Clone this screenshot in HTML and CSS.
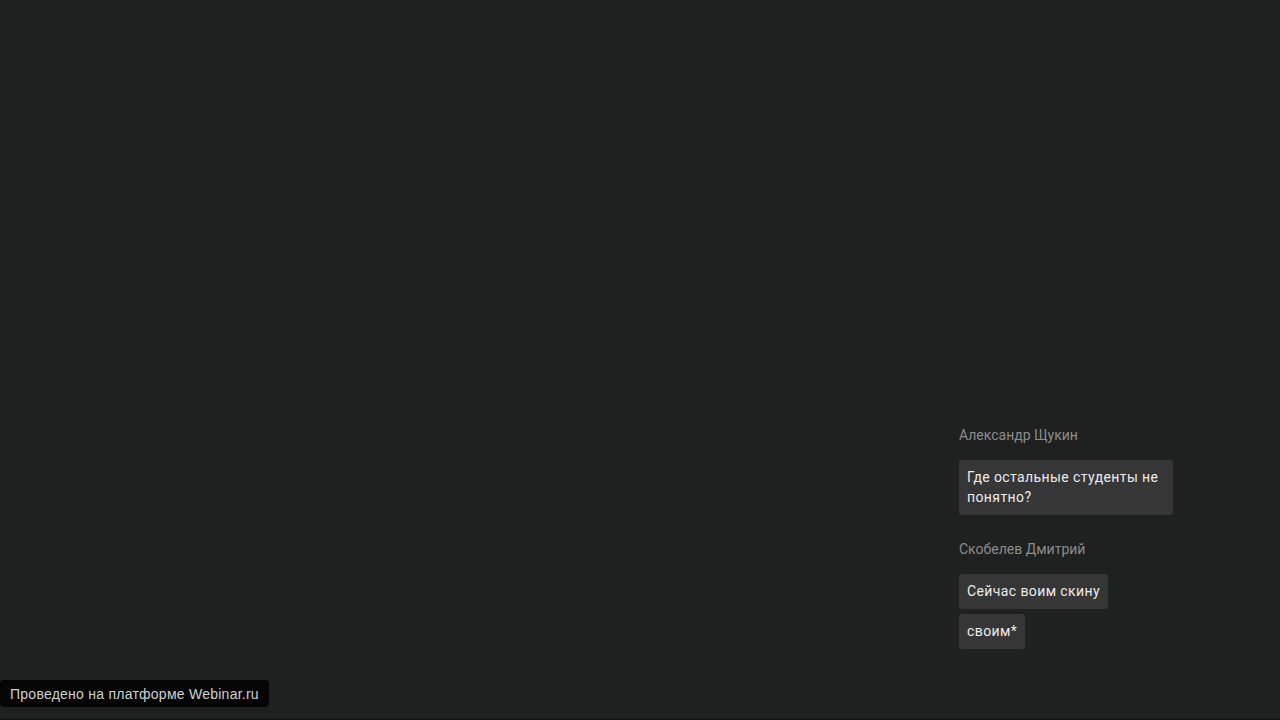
FILE: index.html
```html
<!DOCTYPE html>
<html lang="ru">
<head>
  <meta charset="UTF-8">
  <meta name="viewport" content="width=device-width, initial-scale=1.0">
  <title>Webinar</title>
  <link rel="stylesheet" href="styles.css">
</head>
<body>
  <div class="stage">
    <div class="chat">
      <div class="message-group">
        <div class="author">Александр Щукин</div>
        <div class="bubble">Где остальные студенты не понятно?</div>
      </div>
      <div class="message-group">
        <div class="author">Скобелев Дмитрий</div>
        <div class="bubble">Сейчас воим скину</div>
        <div class="bubble">своим*</div>
      </div>
    </div>
    <div class="platform-badge">Проведено на платформе Webinar.ru</div>
  </div>
</body>
</html>
```

FILE: styles.css
```css
* {
  box-sizing: border-box;
  margin: 0;
  padding: 0;
}
html, body {
  height: 100%;
}
body {
  background: #1f2020;
  font-family: Roboto, "Liberation Sans", sans-serif;
  font-size: 14px;
  line-height: 20px;
  overflow: hidden;
}
.stage {
  position: relative;
  height: 720px;
  border-bottom: 1px solid #111212;
  display: flex;
  justify-content: flex-end;
  align-items: flex-end;
  padding: 0 107px 70px 0;
}
.chat {
  width: 214px;
  display: flex;
  flex-direction: column;
  gap: 24px;
}
.message-group {
  display: flex;
  flex-direction: column;
  align-items: flex-start;
  gap: 5px;
}
.author {
  color: #8c8c8c;
  margin-bottom: 10px;
}
.bubble {
  background: #363636;
  color: #ececec;
  border-radius: 3px;
  padding: 7px 8px 8px;
  max-width: 214px;
  letter-spacing: 0.4px;
}
.platform-badge {
  position: absolute;
  left: 0;
  bottom: 12px;
  background: #050505;
  color: #cfcfcf;
  border-radius: 4px;
  padding: 4px 10px 3px;
  font-family: "Liberation Sans", Arial, sans-serif;
  font-size: 14px;
  line-height: 20px;
  letter-spacing: 0.25px;
}
```
